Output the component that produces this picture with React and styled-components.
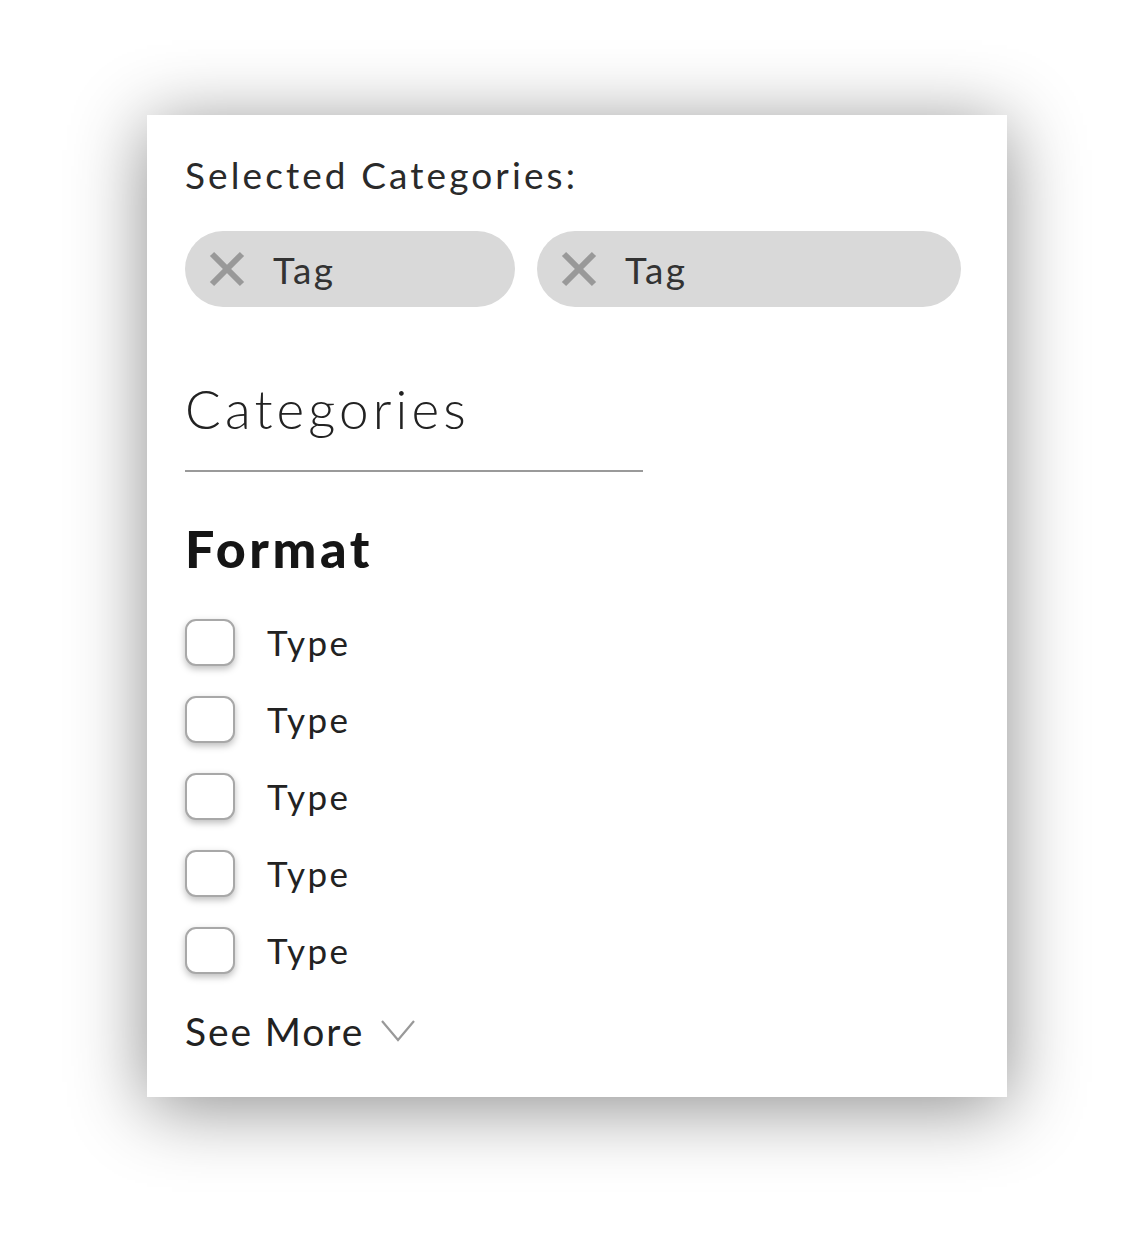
import React from "react";
import styled, { createGlobalStyle } from "styled-components";

const GlobalStyle = createGlobalStyle`
  html, body {
    margin: 0;
    padding: 0;
    background: #ffffff;
  }
  body {
    font-family: Lato, "Noto Sans", "Liberation Sans", sans-serif;
    color: #222;
  }
`;

const Page = styled.div`
  width: 1146px;
  height: 1234px;
  padding: 115px 0 0 147px;
  box-sizing: border-box;
`;

const Panel = styled.aside`
  width: 860px;
  height: 982px;
  box-sizing: border-box;
  padding: 38px 38px 0 38px;
  background: #fff;
  box-shadow: 0 10px 70px rgba(0, 0, 0, 0.45);
  display: flex;
  flex-direction: column;
`;

const Label = styled.div`
  font-size: 37px;
  font-weight: 400;
  letter-spacing: 3.1px;
  color: #2a2a2a;
  line-height: 44px;
`;

const TagRow = styled.div`
  display: flex;
  gap: 22px;
  margin-top: 34px;
`;

const Tag = styled.button`
  width: ${(p) => p.$width}px;
  height: 76px;
  border: none;
  border-radius: 38px;
  background: #d9d9d9;
  display: flex;
  align-items: center;
  padding: 0 0 0 22px;
  gap: 26px;
  font-family: inherit;
  font-size: 37px;
  color: #333;
  letter-spacing: 2.4px;
  cursor: pointer;
`;

const Heading = styled.h2`
  margin: 72px 0 0;
  font-size: 53px;
  font-weight: 300;
  color: #222;
  line-height: 60px;
  letter-spacing: 4.1px;
`;

const Rule = styled.hr`
  width: 458px;
  margin: 31px 0 0;
  border: none;
  border-top: 2px solid #9a9a9a;
`;

const Group = styled.h3`
  margin: 46px 0 0;
  font-size: 52px;
  font-weight: 900;
  color: #151515;
  line-height: 60px;
  letter-spacing: 3.6px;
`;

const List = styled.ul`
  list-style: none;
  margin: 40px 0 0;
  padding: 0;
  display: flex;
  flex-direction: column;
  gap: 29px;
`;

const Item = styled.li`
  display: flex;
  align-items: center;
  gap: 32px;
  height: 48px;
  font-size: 35px;
  color: #222;
  letter-spacing: 2.4px;
`;

const Box = styled.span`
  width: 50px;
  height: 47px;
  box-sizing: border-box;
  border: 2px solid #a8a8a8;
  border-radius: 11px;
  background: #fff;
  box-shadow: 0 3px 7px rgba(0, 0, 0, 0.26);
`;

const More = styled.button`
  margin-top: 34px;
  align-self: flex-start;
  border: none;
  background: none;
  padding: 0;
  display: flex;
  align-items: center;
  gap: 16px;
  font-family: inherit;
  font-size: 39px;
  color: #222;
  letter-spacing: 1.9px;
  cursor: pointer;
`;

const XIcon = () => (
  <svg width="40" height="40" viewBox="0 0 40 40">
    <path d="M5 5 L35 35 M35 5 L5 35" stroke="#999" strokeWidth="6" strokeLinecap="butt" />
  </svg>
);

const Chevron = () => (
  <svg width="36" height="26" viewBox="0 0 36 26">
    <path d="M2 3 L18 22 L34 3" fill="none" stroke="#999" strokeWidth="2.2" />
  </svg>
);

const App = () => {
  const types = ["Type", "Type", "Type", "Type", "Type"];
  return (
    <>
      <GlobalStyle />
      <Page>
        <Panel>
          <Label>Selected Categories:</Label>
          <TagRow>
            <Tag $width={330}>
              <XIcon />
              Tag
            </Tag>
            <Tag $width={424}>
              <XIcon />
              Tag
            </Tag>
          </TagRow>
          <Heading>Categories</Heading>
          <Rule />
          <Group>Format</Group>
          <List>
            {types.map((t, i) => (
              <Item key={i}>
                <Box />
                {t}
              </Item>
            ))}
          </List>
          <More>
            See More
            <Chevron />
          </More>
        </Panel>
      </Page>
    </>
  );
};

export default App;
